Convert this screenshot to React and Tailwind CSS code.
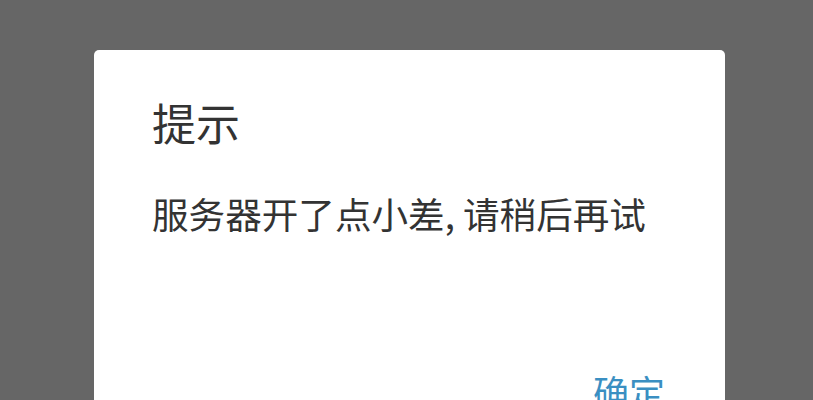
import React from "react";

// Alert dialog over a dimmed backdrop
export default function App() {
  return (
    <div
      className="w-[813px] h-[400px] overflow-hidden bg-[#666666] pt-[50px] pl-[94px]"
      style={{ fontFamily: '"Noto Sans CJK SC", "Noto Sans", sans-serif' }}
    >
      <div className="w-[631px] h-[420px] bg-white rounded-[5px] pl-[58px] pr-[60px] pt-[44px]">
        {/* Title */}
        <h2 className="text-[44px] leading-[56px] text-[#333333]">提示</h2>

        {/* Message */}
        <p className="mt-[40px] text-[36.6px] leading-[48px] text-[#333333] whitespace-nowrap">
          服务器开了点小差, 请稍后再试
        </p>

        {/* Action */}
        <div className="flex justify-end mt-[129px]">
          <button className="text-[36px] leading-[48px] text-[#3a8fc2]">确定</button>
        </div>
      </div>
    </div>
  );
}
